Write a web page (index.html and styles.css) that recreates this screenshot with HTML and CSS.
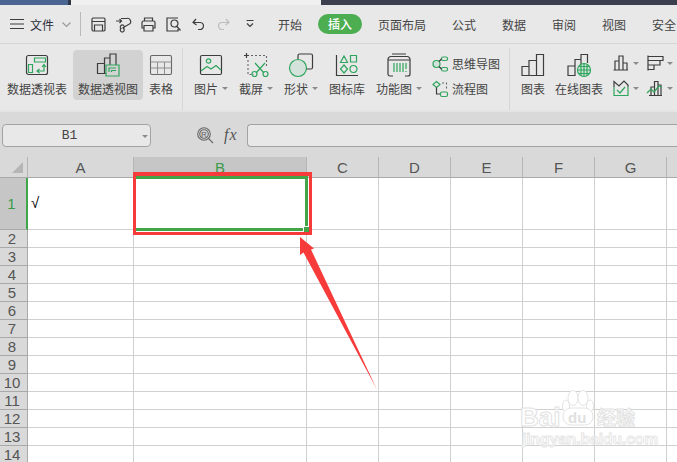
FILE: index.html
```html
<!DOCTYPE html>
<html lang="zh-CN">
<head>
<meta charset="utf-8">
<title>表格</title>
<link rel="stylesheet" href="styles.css">
</head>
<body>
<div class="app">
  <div class="topstrip"><div class="ts-blue"></div><div class="ts-edge"></div><div class="ts-light"></div><div class="ts-dark"></div></div>

  <div class="menubar">
    <svg class="ic ham" viewBox="0 0 14 10"><path class="d" d="M0 .5H14M0 5H14M0 9.500H14"/></svg>
    <span class="filemenu">文件</span>
    <svg class="ic chev" viewBox="0 0 9 5"><path class="c-soft" d="M.5 .5L4.500 4.500L8.500 .5"/></svg>
    <span class="msep"></span>
    <div class="quick">
      <svg class="ic qi" viewBox="0 0 15 15"><path class="d" d="M2 1H13A1.500 1.500 0 0 1 14 2.500V13A1.500 1.500 0 0 1 12.500 14H2.500A1.500 1.500 0 0 1 1 12.500V2.500A1.500 1.500 0 0 1 2 1ZM1 4.500H14M3.500 14V8H11.500V14"/></svg>
      <svg class="ic qi" viewBox="0 0 15 15"><path class="d" d="M0 4H5M3.500 2L5.500 4L3.500 6M5 1.500H10.500A3 3 0 0 1 12.500 7.500L6.500 11M5 11.500A2 2 0 1 0 7.500 11.500A2 2 0 1 0 5 11.500Z"/></svg>
      <svg class="ic qi" viewBox="0 0 15 15"><path class="d" d="M3.500 4V1H11.500V4M3 11H1V5.500A1.500 1.500 0 0 1 2.500 4H12.500A1.500 1.500 0 0 1 14 5.500V11H12M3 8.500H12V14H3Z"/></svg>
      <svg class="ic qi" viewBox="0 0 15 15"><path class="d" d="M12 1H1V14H12V12M5 6.500A3.500 3.500 0 1 0 12 6.500A3.500 3.500 0 1 0 5 6.500ZM11 9.500L14.500 13.500"/></svg>
      <svg class="ic qi" viewBox="0 0 15 15"><path class="d" d="M5 2L2 5.500L5.500 8M2 5.500H9A3.500 3.500 0 0 1 9 12.500H7"/></svg>
      <svg class="ic qi" viewBox="0 0 15 15"><path class="f" d="M10 2L13 5.500L9.500 8M13 5.500H6A3.500 3.500 0 0 0 6 12.500H8"/></svg>
      <svg class="ic qdrop" viewBox="0 0 8 8"><path class="d" d="M.5 .5H7.500M1 3.500L4 6.500L7 3.500"/></svg>
    </div>
    <nav class="tabs">
      <span>开始</span>
      <span class="pill">插入</span>
      <span>页面布局</span>
      <span>公式</span>
      <span>数据</span>
      <span>审阅</span>
      <span>视图</span>
      <span>安全</span>
    </nav>
  </div>

  <div class="ribbon">
    <div class="rb w-wide">
      <svg class="ic ricon" viewBox="0 0 24 24"><rect class="d" x="1.500" y="2.500" width="21" height="19" rx="2"/><path class="g" d="M9.500 5H20.500V9H9.500ZM3.500 11.500H7.500V19.500H3.500ZM12.500 18H19V12M17 14L19 11.500L21 14M14.500 16L12 18L14.500 20"/></svg>
      <span class="lb">数据透视表</span>
    </div>
    <div class="rb w-wide active">
      <svg class="ic ricon" viewBox="0 0 24 24"><path class="d" d="M10 20.500H1.500V10.500H8.500V20.500M8.500 10.500V5H14M14 12V1H20V12"/><path class="g" d="M10 12H23V23H10ZM13 19V15H20"/><path class="g" d="M15.500 19V17.500H20"/></svg>
      <span class="lb">数据透视图</span>
    </div>
    <div class="rb w-table">
      <svg class="ic ricon" viewBox="0 0 24 24"><rect class="m" x="1.500" y="2.500" width="21" height="19" rx="1.500"/><path class="l" d="M1.500 9H22.500M1.500 15H22.500M8.500 9V21.500M15.500 9V21.500"/></svg>
      <span class="lb">表格</span>
    </div>
    <span class="rsep sep-a"></span>
    <div class="rgroup">
      <div class="rb">
        <svg class="ic ricon" viewBox="0 0 24 24"><rect class="d" x="1.500" y="2.500" width="21" height="19" rx="1.500"/><circle class="g" cx="9.500" cy="8" r="2.200"/><path class="g" d="M2 18L8 13.500L12 16L17 12.500L22 17"/></svg>
        <span class="lb">图片<i class="caret"></i></span>
      </div>
      <div class="rb">
        <svg class="ic ricon" viewBox="0 0 24 24"><path class="d" d="M0 2.500H5M2.500 0V5"/><path class="m dash" d="M7 2.500H22.500V13M4 7V21.500H10"/><path class="g" d="M11 10L20 20M21 10L12 20"/><circle class="g" cx="10.500" cy="21" r="2.500"/><circle class="g" cx="21.500" cy="21" r="2.500"/></svg>
        <span class="lb">截屏<i class="caret"></i></span>
      </div>
      <div class="rb">
        <svg class="ic ricon" viewBox="0 0 24 24"><path class="d" d="M9 8V2.500A1.500 1.500 0 0 1 10.500 1H22A1.500 1.500 0 0 1 23.500 2.500V14.500A1.500 1.500 0 0 1 22 16H17"/><circle class="gf" cx="9" cy="15" r="8.500"/></svg>
        <span class="lb">形状<i class="caret"></i></span>
      </div>
      <div class="rb">
        <svg class="ic ricon" viewBox="0 0 24 24"><path class="d" d="M1.500 2V22.500H23"/><path class="g" d="M9 3L12.500 9.500H5.500ZM15.500 2.500H21.500V9H15.500ZM9 12L12.500 16L9 20L5.500 16ZM15 16A3.500 3.500 0 1 0 22 16A3.500 3.500 0 1 0 15 16Z"/></svg>
        <span class="lb">图标库</span>
      </div>
      <div class="rb">
        <svg class="ic ricon" viewBox="0 0 24 24"><path class="d" d="M1 7A3 3 0 0 1 4 3.500H20A3 3 0 0 1 23 7V21A2 2 0 0 1 21 23H18M6 23H3A2 2 0 0 1 1 21V7H23M5 1H19"/><path class="g" d="M7 10V19M10 10V19M13 10V19M16 10V19M19 10V16M19 18V19"/></svg>
        <span class="lb">功能图<i class="caret"></i></span>
      </div>
    </div>
    <div class="rsmall">
      <div class="rs-row">
        <svg class="ic sm" viewBox="0 0 16 16"><circle class="gf" cx="4.500" cy="8" r="3.500"/><rect class="g" x="9.500" y="1" width="6" height="3.500" rx="1.500"/><rect class="g" x="9.500" y="11.500" width="6" height="3.500" rx="1.500"/><path class="d" d="M7 5.500L9.500 3M7 10.500L9.500 13"/></svg>
        <span class="lb">思维导图</span>
      </div>
      <div class="rs-row">
        <svg class="ic sm" viewBox="0 0 16 16"><path class="g" d="M4.500 .5L8 3.500L4.500 6.500L1 3.500Z"/><path class="m dash" d="M10 2H14.500V9"/><path class="d" d="M4.500 6.500V13H8"/><rect class="g" x="8.500" y="11" width="7" height="4.500" rx="1.500"/></svg>
        <span class="lb">流程图</span>
      </div>
    </div>
    <span class="rsep sep-b"></span>
    <div class="rb w-chart">
      <svg class="ic ricon" viewBox="0 0 24 24"><path class="d" d="M1 22.500V13.500H8V22.500ZM8 22.500V7.500H15.500V22.500ZM15.500 22.500V1.500H22.500V22.500Z"/></svg>
      <span class="lb">图表</span>
    </div>
    <div class="rb w-online">
      <svg class="ic ricon" viewBox="0 0 26 24"><path class="d" d="M9 22.500H2V13H9ZM9 13V6.500H15M15 16V1.500H21.500V10"/><circle class="gf" cx="18" cy="17" r="6.500"/><path class="g" d="M11.500 17H24.500M12.500 13.500H23.500M12.500 20.500H23.500M18 10.500V23.500M15 11.500V22.500M21 11.500V22.500"/></svg>
      <span class="lb">在线图表</span>
    </div>
    <div class="rgrid">
      <div class="rg-item"><svg class="ic sq" viewBox="0 0 16 16"><path class="d" d="M.5 15H15M2 15V6H6V15M6 15V1H10V15M10 15V8H14V15"/></svg><i class="caret"></i></div>
      <div class="rg-item"><svg class="ic sq" viewBox="0 0 16 16"><path class="d" d="M1 .5V15.500M1 1.500H16V5.500H1M1 5.500H13V10H1M1 10H7V14.500H1"/></svg><i class="caret"></i></div>
      <div class="rg-item"><svg class="ic sq" viewBox="0 0 16 16"><path class="d" d="M1 7V1.500L6 6L11 1L15 5V7"/><path class="g" d="M1 7V15.500H15V7M4 10L7 13L12 7"/></svg><i class="caret"></i></div>
      <div class="rg-item"><svg class="ic sq" viewBox="0 0 16 16"><path class="d" d="M2 15.500H15M4 15.500V7H7.500V15.500M7.500 15.500V1.500H11V15.500M11 15.500V5H14V15.500"/><path class="g" d="M0 13L4 9L7 12L12 6L15 7"/></svg><i class="caret"></i></div>
    </div>
  </div>

  <div class="fbar">
    <div class="namebox"><span class="nb-text">B1</span><i class="caret nb-caret"></i></div>
    <svg class="ic fzoom" viewBox="0 0 17 17"><circle class="m" cx="7" cy="7" r="6.300"/><circle class="m" cx="7" cy="7" r="4.300"/><path class="m" d="M11.500 11.500L16 16"/><text class="fz-r" x="7" y="9.500">R</text></svg>
    <span class="fx">fx</span>
    <div class="finput"></div>
  </div>

  <div class="sheet">
    <div class="row head">
      <div class="c rh corner"><i class="tri"></i></div>
      <div class="c ca">A</div><div class="c cb hsel">B</div><div class="c cn">C</div><div class="c cn">D</div><div class="c cn">E</div><div class="c cn">F</div><div class="c cn">G</div><div class="c cn"></div>
    </div>
    <div class="row r1">
      <div class="c rh rsel">1</div>
      <div class="c ca val">√</div>
      <div class="c cb bsel"><i class="selbox"></i><i class="handle"></i></div><div class="c cn"></div><div class="c cn"></div><div class="c cn"></div><div class="c cn"></div><div class="c cn"></div><div class="c cn"></div>
    </div>
    <div class="row"><div class="c rh">2</div><div class="c ca"></div><div class="c cb"></div><div class="c cn"></div><div class="c cn"></div><div class="c cn"></div><div class="c cn"></div><div class="c cn"></div><div class="c cn"></div></div>
    <div class="row"><div class="c rh">3</div><div class="c ca"></div><div class="c cb"></div><div class="c cn"></div><div class="c cn"></div><div class="c cn"></div><div class="c cn"></div><div class="c cn"></div><div class="c cn"></div></div>
    <div class="row"><div class="c rh">4</div><div class="c ca"></div><div class="c cb"></div><div class="c cn"></div><div class="c cn"></div><div class="c cn"></div><div class="c cn"></div><div class="c cn"></div><div class="c cn"></div></div>
    <div class="row"><div class="c rh">5</div><div class="c ca"></div><div class="c cb"></div><div class="c cn"></div><div class="c cn"></div><div class="c cn"></div><div class="c cn"></div><div class="c cn"></div><div class="c cn"></div></div>
    <div class="row"><div class="c rh">6</div><div class="c ca"></div><div class="c cb"></div><div class="c cn"></div><div class="c cn"></div><div class="c cn"></div><div class="c cn"></div><div class="c cn"></div><div class="c cn"></div></div>
    <div class="row"><div class="c rh">7</div><div class="c ca"></div><div class="c cb"></div><div class="c cn"></div><div class="c cn"></div><div class="c cn"></div><div class="c cn"></div><div class="c cn"></div><div class="c cn"></div></div>
    <div class="row"><div class="c rh">8</div><div class="c ca"></div><div class="c cb"></div><div class="c cn"></div><div class="c cn"></div><div class="c cn"></div><div class="c cn"></div><div class="c cn"></div><div class="c cn"></div></div>
    <div class="row"><div class="c rh">9</div><div class="c ca"></div><div class="c cb"></div><div class="c cn"></div><div class="c cn"></div><div class="c cn"></div><div class="c cn"></div><div class="c cn"></div><div class="c cn"></div></div>
    <div class="row"><div class="c rh">10</div><div class="c ca"></div><div class="c cb"></div><div class="c cn"></div><div class="c cn"></div><div class="c cn"></div><div class="c cn"></div><div class="c cn"></div><div class="c cn"></div></div>
    <div class="row"><div class="c rh">11</div><div class="c ca"></div><div class="c cb"></div><div class="c cn"></div><div class="c cn"></div><div class="c cn"></div><div class="c cn"></div><div class="c cn"></div><div class="c cn"></div></div>
    <div class="row"><div class="c rh">12</div><div class="c ca"></div><div class="c cb"></div><div class="c cn"></div><div class="c cn"></div><div class="c cn"></div><div class="c cn"></div><div class="c cn"></div><div class="c cn"></div></div>
    <div class="row"><div class="c rh">13</div><div class="c ca"></div><div class="c cb"></div><div class="c cn"></div><div class="c cn"></div><div class="c cn"></div><div class="c cn"></div><div class="c cn"></div><div class="c cn"></div></div>
    <div class="row"><div class="c rh">14</div><div class="c ca"></div><div class="c cb"></div><div class="c cn"></div><div class="c cn"></div><div class="c cn"></div><div class="c cn"></div><div class="c cn"></div><div class="c cn"></div></div>
  </div>

  <div class="redbox"></div>
  <svg class="arrow" viewBox="0 0 80 155"><polygon points="2,2 16,13.500 13,14.500 78.700,154 5.500,17.500 2,20"/></svg>

  <div class="watermark">
    <svg class="paw" viewBox="0 0 35 37"><ellipse cx="6" cy="17" rx="3.500" ry="6"/><ellipse cx="13" cy="9" rx="5" ry="7.500"/><ellipse cx="23" cy="9" rx="5" ry="7.500"/><ellipse cx="30" cy="17" rx="3.500" ry="6"/><rect x="3" y="19" width="30" height="17" rx="8"/></svg>
    <div class="wm-line"><span class="wm-bai">Bai</span><span class="wm-du">du</span><span class="wm-cn">经验</span></div>
    <div class="wm-url">jingyan.baidu.com</div>
  </div>
</div>
</body>
</html>
```

FILE: styles.css
```css
* { box-sizing: border-box; }
html, body { margin: 0; padding: 0; height: 100%; overflow: hidden; background: #fff; }
body { font-family: "Noto Sans CJK SC", "Noto Sans", sans-serif; color: #444; }

.app { position: relative; width: 677px; height: 462px; overflow: hidden; display: flex; flex-direction: column; }

.ic { display: block; flex: none; fill: none; overflow: visible; }
.d { stroke: #3d3d3d; stroke-width: 1.2; fill: none; }
.m { stroke: #666; stroke-width: 1.1; fill: none; }
.l { stroke: #8d8d8d; stroke-width: 1; fill: none; }
.f { stroke: #bdbdbd; stroke-width: 1.2; fill: none; }
.c-soft { stroke: #999; stroke-width: 1.1; fill: none; }
.g { stroke: #2fa55d; stroke-width: 1.2; fill: none; }
.gf { stroke: #2fa55d; stroke-width: 1.2; fill: #d3e2da; }
.dash { stroke-dasharray: 2 2; }

/* top window strip */
.topstrip { display: flex; height: 5px; flex: none; }
.ts-blue { width: 68px; background: #4a6592; }
.ts-edge { width: 3px; background: #2e3648; }
.ts-light { width: 250px; background: #f0f0f0; }
.ts-dark { flex: 1; background: #3b3e4d; }

/* menu bar */
.menubar { display: flex; align-items: center; height: 39px; flex: none; padding: 0 0 0 10px; background: #e8e8e8; border-bottom: 1px solid #d6d6d6; }
.ham { width: 14px; height: 10px; }
.filemenu { margin-left: 6px; font-size: 12px; color: #2a2f3a; width: 24px; white-space: nowrap; }
.chev { width: 9px; height: 5px; margin-left: 8px; }
.msep { width: 1px; height: 24px; background: #b9b9b9; margin-left: 9px; }
.quick { display: flex; align-items: center; margin-left: 10px; gap: 10px; }
.qi { width: 15px; height: 15px; }
.qdrop { width: 8px; height: 8px; margin-left: 5px; }
.tabs { display: flex; align-items: center; gap: 26px; margin-left: 24px; font-size: 12px; white-space: nowrap; color: #444; }
.pill { background: #4cae50; color: #fff; width: 44px; height: 20px; line-height: 20px; text-align: center; border-radius: 10px; margin: 0 -10px; font-weight: 500; }

/* ribbon */
.ribbon { display: flex; align-items: flex-start; height: 66px; flex: none; padding: 6px 0 0 2px; background: #e8e8e8; overflow: hidden; }
.rb { display: flex; flex-direction: column; align-items: center; height: 50px; flex: none; border-radius: 4px; }
.ricon { width: 24px; height: 24px; margin-top: 3px; }
.lb { font-size: 12px; line-height: 17px; margin-top: 3px; color: #444; white-space: nowrap; display: flex; align-items: center; }
.w-wide { width: 70px; margin-right: 1px; }
.w-table { width: 34px; }
.active { background: #d2d2d2; }
.caret { display: block; width: 0; height: 0; border: 3px solid transparent; border-top: 3px solid #8b8b8b; border-bottom: 0; margin-left: 4px; }
.rsep { display: block; width: 1px; height: 62px; background: #d6d6d6; flex: none; margin-top: -2px; }
.sep-a { margin-left: 4px; margin-right: 11px; }
.sep-b { margin-left: 9px; margin-right: 11px; }
.rgroup { display: flex; gap: 11px; }
.rsmall { display: flex; flex-direction: column; margin-left: 10px; gap: 8px; padding-top: 5px; }
.rs-row { display: flex; align-items: center; gap: 4px; height: 17px; }
.rs-row .lb { margin-top: 0; }
.sm { width: 16px; height: 16px; }
.w-chart { width: 24px; margin-right: 10px; }
.w-online { width: 48px; margin-right: 10px; }
.w-online .ricon { width: 26px; }
.rgrid { display: grid; grid-template-columns: 34px 34px; row-gap: 9px; padding-top: 5px; }
.rg-item { display: flex; align-items: center; height: 16px; }
.sq { width: 16px; height: 16px; }

/* formula bar */
.fbar { display: flex; align-items: flex-start; height: 47px; flex: none; padding: 12px 0 0 2px; background: #d9d9d9; border-top: 2px solid #e4e4e4; }
.namebox { position: relative; display: flex; align-items: center; justify-content: center; width: 149px; height: 23px; padding-right: 14px; background: #e8e8e8; border: 1px solid #a3a3a3; border-radius: 4px; }
.nb-text { font: 13px "Liberation Mono", monospace; color: #444; }
.nb-caret { position: absolute; right: 2px; top: 10px; margin: 0; }
.fzoom { width: 17px; height: 17px; margin: 3px 0 0 46px; }
.fz-r { font: 8px "Liberation Sans", sans-serif; fill: #555; text-anchor: middle; }
.fx { font: italic 16px/20px "Liberation Serif", serif; color: #555; margin: 1px 0 0 10px; width: 23px; letter-spacing: 1px; }
.finput { flex: 1; height: 23px; background: #e8e8e8; border: 1px solid #a3a3a3; border-right: 0; border-radius: 4px 0 0 4px; }

/* sheet */
.sheet { position: relative; flex: 1; background: #fff; overflow: hidden; font-family: "Liberation Sans", sans-serif; }
.row { display: flex; height: 18px; }
.head { height: 21px; background: #d9d9d9; }
.r1 { height: 52px; }
.c { flex: none; height: 100%; border-right: 1px solid #d0d0d0; border-bottom: 1px solid #d0d0d0; }
.rh { display: flex; align-items: center; justify-content: center; width: 28px; background: #d9d9d9; border-right-color: #a9a9a9; border-bottom-color: #a9a9a9; font-size: 15px; color: #555; position: relative; padding-right: 3px; }
.ca { width: 106px; }
.cb { width: 173px; }
.cn { width: 72px; }
.head .c { display: flex; align-items: center; justify-content: center; font-size: 15px; color: #555; border-right-color: #b5b5b5; border-bottom-color: #a9a9a9; padding-top: 1px; }
.head .corner { position: relative; }
.tri { position: absolute; left: 12px; top: 5px; width: 0; height: 0; border-left: 11px solid transparent; border-bottom: 11px solid #b5b5b5; }
.head .hsel { background: #c6c6c6; color: #3a9b4a; }
.rsel { background: #c6c6c6; color: #3a9b4a; border-right: 2px solid #3fa64a; }
.val { display: flex; align-items: center; padding: 0 0 3px 3px; font: 400 15px "Liberation Sans", sans-serif; color: #000; }
.bsel { position: relative; }
.selbox { position: absolute; left: -1px; top: -2px; right: -2px; bottom: -2px; border: 3px solid #43a547; }
.handle { position: absolute; right: -3px; bottom: -3px; width: 5px; height: 5px; background: #43a547; outline: 1px solid #fff; }

/* annotations over the sheet */
.redbox { position: absolute; left: 133px; top: 172px; width: 179px; height: 63px; border: 3px solid #f73b3b; border-top-width: 4px; }
.arrow { position: absolute; left: 298px; top: 235px; width: 80px; height: 155px; fill: #f73b3b; }

.watermark { position: absolute; left: 520px; top: 389px; width: 124px; height: 60px; color: #fff; font-family: "Liberation Sans", sans-serif; }
.paw { position: absolute; left: 40px; top: 0; width: 35px; height: 37px; fill: #fff; stroke: #e4e4e4; stroke-width: 1; }
.wm-line { position: absolute; left: 0; top: 16px; display: flex; align-items: center; height: 24px; white-space: nowrap; }
.wm-bai { font-size: 26px; font-weight: 700; color: #fff; -webkit-text-stroke: 1px #e2e2e2; width: 46px; }
.wm-du { position: relative; font-size: 15px; font-weight: 700; color: #e0e0e0; width: 31px; padding-left: 2px; }
.wm-cn { font: 700 19px/24px "Noto Sans CJK SC", sans-serif; color: #fff; -webkit-text-stroke: 1px #e2e2e2; }
.wm-url { position: absolute; left: 2px; top: 41px; font-size: 15.500px; font-weight: 700; color: #fff; -webkit-text-stroke: 1px #e6e6e6; white-space: nowrap; }
```
